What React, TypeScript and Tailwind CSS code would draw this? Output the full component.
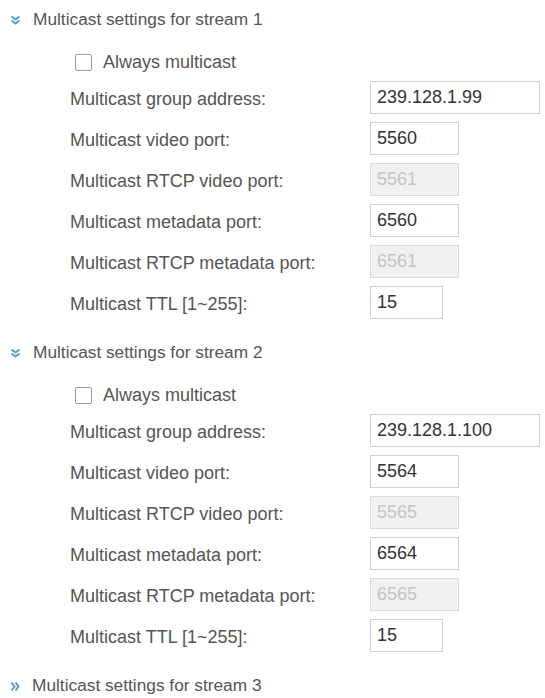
import React from 'react';

type Row = { label: string; value: string; width: string; disabled?: boolean };

const DownArrows = () => (
  <svg width="11" height="10" viewBox="0 0 11 10" className="shrink-0">
    <polyline points="1.5,1.5 5.5,4.5 9.5,1.5" fill="none" stroke="#4aa3d6" strokeWidth="2" />
    <polyline points="1.5,5.5 5.5,8.5 9.5,5.5" fill="none" stroke="#4aa3d6" strokeWidth="2" />
  </svg>
);

const RightArrows = () => (
  <svg width="10" height="11" viewBox="0 0 10 11" className="shrink-0">
    <polyline points="1.5,1.5 4.5,5.5 1.5,9.5" fill="none" stroke="#4aa3d6" strokeWidth="2" />
    <polyline points="5.5,1.5 8.5,5.5 5.5,9.5" fill="none" stroke="#4aa3d6" strokeWidth="2" />
  </svg>
);

const streams: { n: number; rows: Row[] }[] = [
  {
    n: 1,
    rows: [
      { label: 'Multicast group address:', value: '239.128.1.99', width: 'w-[170px]' },
      { label: 'Multicast video port:', value: '5560', width: 'w-[89px]' },
      { label: 'Multicast RTCP video port:', value: '5561', width: 'w-[89px]', disabled: true },
      { label: 'Multicast metadata port:', value: '6560', width: 'w-[89px]' },
      { label: 'Multicast RTCP metadata port:', value: '6561', width: 'w-[89px]', disabled: true },
      { label: 'Multicast TTL [1~255]:', value: '15', width: 'w-[73px]' },
    ],
  },
  {
    n: 2,
    rows: [
      { label: 'Multicast group address:', value: '239.128.1.100', width: 'w-[170px]' },
      { label: 'Multicast video port:', value: '5564', width: 'w-[89px]' },
      { label: 'Multicast RTCP video port:', value: '5565', width: 'w-[89px]', disabled: true },
      { label: 'Multicast metadata port:', value: '6564', width: 'w-[89px]' },
      { label: 'Multicast RTCP metadata port:', value: '6565', width: 'w-[89px]', disabled: true },
      { label: 'Multicast TTL [1~255]:', value: '15', width: 'w-[73px]' },
    ],
  },
];

const Header = ({ n, open }: { n: number; open: boolean }) => (
  <div className="h-[40px] flex items-center pl-[10px] gap-[12px]">
    {open ? <DownArrows /> : <RightArrows />}
    <span className="text-[17.3px] text-[#555]">Multicast settings for stream {n}</span>
  </div>
);

export default function App() {
  return (
    <div className="w-[545px] h-[698px] bg-white overflow-hidden font-['Liberation_Sans',Arial,sans-serif]">
      {streams.map(s => (
        <div key={s.n} className="pb-[10px]">
          <Header n={s.n} open />
          <div className="h-[37px] pt-2 flex items-center pl-[75px] gap-[11px]">
            <span className="w-[17px] h-[17px] border border-[#9a9a9a] bg-white rounded-[2px]" />
            <span className="text-[18px] text-[#555]">Always multicast</span>
          </div>
          {s.rows.map(r => (
            <div key={r.label} className="h-[41px] flex items-center">
              <span className="w-[370px] shrink-0 pl-[70px] pt-[3px] text-[18px] text-[#555] whitespace-nowrap">{r.label}</span>
              <div
                className={`${r.width} h-[33px] flex items-center pl-[6px] border text-[18px] ${
                  r.disabled ? 'bg-[#f1f1f1] border-[#dadada] text-[#c4c4c4]' : 'bg-white border-[#cfcfcf] text-[#333]'
                }`}
              >
                {r.value}
              </div>
            </div>
          ))}
        </div>
      ))}
      <Header n={3} open={false} />
    </div>
  );
}
